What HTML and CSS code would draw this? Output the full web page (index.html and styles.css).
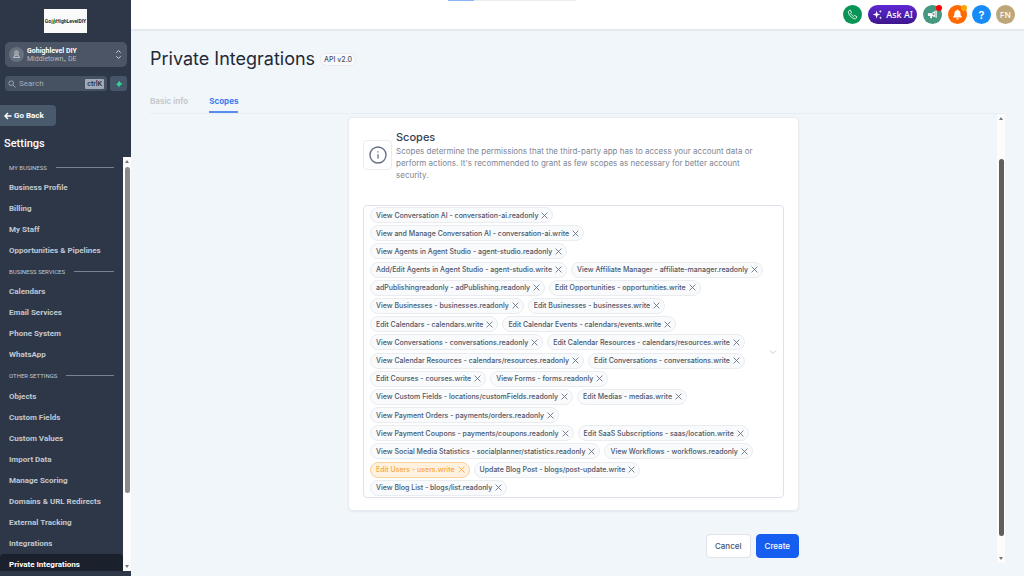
FILE: index.html
```html
<!DOCTYPE html>
<html lang="en">
<head>
<meta charset="utf-8">
<title>Private Integrations</title>
<link rel="stylesheet" href="styles.css">
</head>
<body>
<svg class="sprite" aria-hidden="true">
  <symbol id="x" viewBox="0 0 8 8"><path d="M1 1l6 6M7 1L1 7" fill="none" stroke="currentColor" stroke-width="1" stroke-linecap="round"/></symbol>
</svg>
<div class="app">
  <aside class="sidebar">
    <div class="brand"><span class="logo">Go<svg viewBox="0 0 6 7" aria-hidden="true"><path d="M0 3l1.500-2L3 3v4H0z" fill="#f5a623"/><path d="M2 4l2-4 2 4v1H4v2H2z" fill="#29a9d6"/><path d="M4 3l1-1 1 1v2L4 7z" fill="#3bb54a"/></svg>HighLevelDIY</span></div>
    <button class="account" type="button">
      <span class="account-icon"><svg viewBox="0 0 12 12" aria-hidden="true"><g fill="none" stroke="currentColor"><circle cx="6" cy="3.500" r="2.500"/><circle cx="6" cy="3.500" r=".6"/><path d="M4 6L2 10h8L8 6M4 8.500l2-2 2 2"/></g></svg></span>
      <span class="account-text"><strong>Gohighlevel DIY</strong><span>Middletown,, DE</span></span>
      <svg class="account-arrows" viewBox="0 0 8 12" aria-hidden="true"><path d="M1.500 4L4 1.500 6.500 4M1.500 8L4 10.500 6.500 8" fill="none" stroke="currentColor" stroke-width="1.100"/></svg>
    </button>
    <div class="search-row">
      <div class="search">
        <svg viewBox="0 0 10 10" aria-hidden="true"><path d="M6.500 6.500L9.300 9.300" stroke="currentColor" stroke-width="1.100"/><circle cx="4" cy="4" r="2.900" fill="none" stroke="currentColor" stroke-width="1.100"/></svg>
        <input type="text" placeholder="Search" aria-label="Search">
        <kbd>ctrlK</kbd>
      </div>
      <button class="bolt" type="button" aria-label="Quick actions"><svg viewBox="0 0 8 8" aria-hidden="true"><path d="M4.300.8L5.500 2.800 7.300 3.700 5.400 5.200 3.700 7.400 2.900 5.300.9 4.400 2.800 2.900z" fill="#34d399"/></svg></button>
    </div>
    <button class="back" type="button"><svg viewBox="0 0 8 8" aria-hidden="true"><path d="M7.500 4H1M4 1L1 4l3 3" fill="none" stroke="currentColor" stroke-width="1.400"/></svg>Go Back</button>
    <h2 class="side-title">Settings</h2>
    <div class="nav-wrap">
      <nav class="nav">
        <div class="nav-label">MY BUSINESS</div>
        <a href="#">Business Profile</a>
        <a href="#">Billing</a>
        <a href="#">My Staff</a>
        <a href="#">Opportunities &amp; Pipelines</a>
        <div class="nav-label">BUSINESS SERVICES</div>
        <a href="#">Calendars</a>
        <a href="#">Email Services</a>
        <a href="#">Phone System</a>
        <a href="#">WhatsApp</a>
        <div class="nav-label">OTHER SETTINGS</div>
        <a href="#">Objects</a>
        <a href="#">Custom Fields</a>
        <a href="#">Custom Values</a>
        <a href="#">Import Data</a>
        <a href="#">Manage Scoring</a>
        <a href="#">Domains &amp; URL Redirects</a>
        <a href="#">External Tracking</a>
        <a href="#">Integrations</a>
        <a href="#" class="active" aria-current="page">Private Integrations</a>
      </nav>
      <div class="scrollbar side-scroll" aria-hidden="true"><i class="up"></i><span class="thumb"></span><i class="down"></i></div>
    </div>
  </aside>

  <div class="page">
    <header class="topbar">
      <div class="loader"></div>
      <button class="round green" type="button" aria-label="Phone"><svg viewBox="0 0 12 12" aria-hidden="true"><path d="M2.200 1.800l1.300-.6L5 3.700l-1 .9c.5 1.500 1.700 2.800 3.300 3.400l1-1 2.500 1.500-.6 1.500c-.3.600-1 .8-1.700.7C4.900 10 2.100 7.100 1.500 3.400c-.1-.7.100-1.300.7-1.600z" fill="none" stroke="#fff" stroke-width=".9"/></svg></button>
      <button class="ask" type="button"><svg viewBox="0 0 12 12" aria-hidden="true"><path d="M5 2l1 3 3 1.100-3 1L5 10.300 4 7.100l-3.300-1L4 5z" fill="#fff"/><path d="M9 .7l.5 1.400 1.300.5-1.300.5L9 4.400l-.5-1.300-1.300-.5 1.300-.5zM9.300 8l.5 1.200 1.200.5-1.200.5-.5 1.200-.5-1.200-1.200-.5 1.200-.5z" fill="#fff"/></svg>Ask AI</button>
      <button class="round teal" type="button" aria-label="Announcements"><svg viewBox="0 0 12 12" aria-hidden="true"><path d="M1 4.500h4L9 2v7L5.500 7.500V10h-2V7.500H1z" fill="#fff"/><path d="M10 1.500v8" stroke="#fff" stroke-width="1.200"/><path d="M6 5l2-1v3L6 6z" fill="#43987f"/></svg><span class="badge red"></span></button>
      <button class="round orange" type="button" aria-label="Notifications"><svg viewBox="0 0 12 12" aria-hidden="true"><path d="M6 .5c.6 0 .8.400.8.900C8.500 1.800 9.300 3 9.300 5c0 2 .5 2.600 1.500 3.500v.7H1.200v-.7C2.200 7.600 2.700 7 2.700 5c0-2 .8-3.200 2.500-3.600 0-.5.200-.9.800-.9zM4.700 10h2.600c0 .9-.6 1.400-1.300 1.400S4.700 10.900 4.700 10z" fill="#fff"/></svg><span class="badge amber"></span></button>
      <button class="round blue" type="button" aria-label="Help">?</button>
      <button class="round tan" type="button" aria-label="Profile">FN</button>
    </header>
    <main class="main">
      <div class="heading"><h1>Private Integrations</h1><span class="version">API v2.0</span></div>
      <div class="tabs"><a href="#">Basic info</a><a href="#" class="selected" aria-current="page">Scopes</a></div>
      <div class="body">
        <div class="column">
          <section class="card">
            <div class="intro">
              <span class="info"><svg viewBox="0 0 18 18" aria-hidden="true"><circle cx="9" cy="9" r="8" fill="none" stroke="currentColor" stroke-width="1.400"/><path d="M9 8.200v4.300M9 5.200v1.300" stroke="currentColor" stroke-width="1.300"/></svg></span>
              <div><h2>Scopes</h2><p>Scopes determine the permissions that the third-party app has to access your account data or perform actions. It's recommended to grant as few scopes as necessary for better account security.</p></div>
            </div>
            <div class="select">
              <div class="tags">
                <div class="line"><span class="tag">View Conversation AI - conversation-ai.readonly<button type="button" aria-label="Remove"><svg><use href="#x"/></svg></button></span></div>
                <div class="line"><span class="tag">View and Manage Conversation AI - conversation-ai.write<button type="button" aria-label="Remove"><svg><use href="#x"/></svg></button></span></div>
                <div class="line"><span class="tag">View Agents in Agent Studio - agent-studio.readonly<button type="button" aria-label="Remove"><svg><use href="#x"/></svg></button></span></div>
                <div class="line"><span class="tag">Add/Edit Agents in Agent Studio - agent-studio.write<button type="button" aria-label="Remove"><svg><use href="#x"/></svg></button></span><span class="tag">View Affiliate Manager - affiliate-manager.readonly<button type="button" aria-label="Remove"><svg><use href="#x"/></svg></button></span></div>
                <div class="line"><span class="tag">adPublishingreadonly - adPublishing.readonly<button type="button" aria-label="Remove"><svg><use href="#x"/></svg></button></span><span class="tag">Edit Opportunities - opportunities.write<button type="button" aria-label="Remove"><svg><use href="#x"/></svg></button></span></div>
                <div class="line"><span class="tag">View Businesses - businesses.readonly<button type="button" aria-label="Remove"><svg><use href="#x"/></svg></button></span><span class="tag">Edit Businesses - businesses.write<button type="button" aria-label="Remove"><svg><use href="#x"/></svg></button></span></div>
                <div class="line"><span class="tag">Edit Calendars - calendars.write<button type="button" aria-label="Remove"><svg><use href="#x"/></svg></button></span><span class="tag">Edit Calendar Events - calendars/events.write<button type="button" aria-label="Remove"><svg><use href="#x"/></svg></button></span></div>
                <div class="line"><span class="tag">View Conversations - conversations.readonly<button type="button" aria-label="Remove"><svg><use href="#x"/></svg></button></span><span class="tag">Edit Calendar Resources - calendars/resources.write<button type="button" aria-label="Remove"><svg><use href="#x"/></svg></button></span></div>
                <div class="line"><span class="tag">View Calendar Resources - calendars/resources.readonly<button type="button" aria-label="Remove"><svg><use href="#x"/></svg></button></span><span class="tag">Edit Conversations - conversations.write<button type="button" aria-label="Remove"><svg><use href="#x"/></svg></button></span></div>
                <div class="line"><span class="tag">Edit Courses - courses.write<button type="button" aria-label="Remove"><svg><use href="#x"/></svg></button></span><span class="tag">View Forms - forms.readonly<button type="button" aria-label="Remove"><svg><use href="#x"/></svg></button></span></div>
                <div class="line"><span class="tag">View Custom Fields - locations/customFields.readonly<button type="button" aria-label="Remove"><svg><use href="#x"/></svg></button></span><span class="tag">Edit Medias - medias.write<button type="button" aria-label="Remove"><svg><use href="#x"/></svg></button></span></div>
                <div class="line"><span class="tag">View Payment Orders - payments/orders.readonly<button type="button" aria-label="Remove"><svg><use href="#x"/></svg></button></span></div>
                <div class="line"><span class="tag">View Payment Coupons - payments/coupons.readonly<button type="button" aria-label="Remove"><svg><use href="#x"/></svg></button></span><span class="tag">Edit SaaS Subscriptions - saas/location.write<button type="button" aria-label="Remove"><svg><use href="#x"/></svg></button></span></div>
                <div class="line"><span class="tag">View Social Media Statistics - socialplanner/statistics.readonly<button type="button" aria-label="Remove"><svg><use href="#x"/></svg></button></span><span class="tag">View Workflows - workflows.readonly<button type="button" aria-label="Remove"><svg><use href="#x"/></svg></button></span></div>
                <div class="line"><span class="tag warning">Edit Users - users.write<button type="button" aria-label="Remove"><svg><use href="#x"/></svg></button></span><span class="tag">Update Blog Post - blogs/post-update.write<button type="button" aria-label="Remove"><svg><use href="#x"/></svg></button></span></div>
                <div class="line"><span class="tag">View Blog List - blogs/list.readonly<button type="button" aria-label="Remove"><svg><use href="#x"/></svg></button></span></div>
              </div>
              <button class="open" type="button" aria-label="Show scopes"><svg viewBox="0 0 8 8" aria-hidden="true"><path d="M1 2.500l3 3 3-3" fill="none" stroke="currentColor" stroke-width=".9"/></svg></button>
            </div>
          </section>
          <div class="actions"><button class="btn" type="button">Cancel</button><button class="btn primary" type="button">Create</button></div>
        </div>
        <div class="scrollbar main-scroll" aria-hidden="true"><i class="up"></i><span class="thumb"></span><i class="down"></i></div>
      </div>
    </main>
  </div>
</div>
</body>
</html>
```
FILE: styles.css
```css
* { box-sizing: border-box; }
body { margin: 0; font-family: Inter, sans-serif; color: #1f2937; background: #f1f6fa; }
button, input { font: inherit; color: inherit; border: 0; padding: 0; margin: 0; background: none; }
h1, h2, p { margin: 0; }
a { color: inherit; text-decoration: none; }
svg { display: block; flex: none; }
.sprite { position: absolute; width: 0; height: 0; }
.app { display: flex; height: 100vh; overflow: hidden; }

/* Sidebar */
.sidebar { width: 131px; flex: none; display: flex; flex-direction: column; background: #2d3748; color: #fff; font-family: Roboto, sans-serif; padding-bottom: 5px; }
.brand { display: flex; justify-content: center; padding: 9px 0; }
.logo { display: flex; align-items: center; justify-content: center; width: 43px; height: 24px; background: #fafafa; color: #1c2b2c; font-size: 5px; font-weight: 700; }
.logo svg { width: 5px; height: 6px; }
.account { display: flex; align-items: center; gap: 3px; height: 25px; margin: 0 4px 0 5px; padding: 0 5px 0 4px; border-radius: 5px; background: #4b5565; text-align: left; }
.account-icon { display: grid; place-items: center; width: 15px; height: 15px; border-radius: 50%; background: #66707e; color: #d3d7dc; flex: none; }
.account-icon svg { width: 9px; height: 9px; }
.account-text { flex: 1; display: flex; flex-direction: column; font-size: 7px; line-height: 8px; color: #b4bac3; white-space: nowrap; }
.account-text strong { color: #fff; font-weight: 700; }
.account-arrows { width: 7px; height: 11px; color: #d0d5db; }
.search-row { display: flex; gap: 3px; margin: 9px 4px 0 5px; }
.search { flex: 1; min-width: 0; display: flex; align-items: center; gap: 3px; height: 15px; padding: 0 3px; border-radius: 3px; background: #465162; color: #a3adba; }
.search svg { width: 8px; height: 8px; }
.search input { flex: 1; min-width: 0; width: 0; font-size: 8px; line-height: 12px; outline: 0; }
.search input::placeholder { color: #a3adba; opacity: 1; }
.search kbd { padding: 0 2px; border-radius: 1px; background: #a0a9b7; color: #273142; font-family: inherit; font-size: 7px; font-weight: 500; line-height: 10px; }
.bolt { display: grid; place-items: center; width: 17px; border-radius: 3px; background: #465568; }
.bolt svg { width: 8px; height: 8px; }
.back { align-self: flex-start; display: flex; align-items: center; gap: 2px; height: 21px; margin-top: 14px; padding: 0 12px 0 4px; border-radius: 0 4px 4px 0; background: #4a5a6d; font-size: 8px; font-weight: 700; }
.back svg { width: 8px; height: 8px; }
.side-title { margin: 10px 0 0 4px; font-size: 11px; line-height: 15px; font-weight: 500; }
.nav-wrap { flex: 1; min-height: 0; display: flex; overflow: hidden; margin-top: 6px; }
.nav { flex: 1; min-width: 0; min-height: 418px; align-self: flex-start; display: flex; flex-direction: column; font-size: 8px; font-weight: 700; color: #c1c7d0; white-space: nowrap; }
.nav a { flex: 21 1 0; display: flex; align-items: center; padding-left: 9px; line-height: 11px; }
.nav a::before { content: ""; height: 12px; }
.nav .active { background: #1a202c; color: #fff; border-radius: 4px; }
.nav-label { flex: 20 1 0; display: flex; align-items: center; gap: 9px; padding: 0 9px; font-size: 6px; font-weight: 400; }
.nav-label::after { content: ""; flex: 1; height: 1px; background: #77838d; }

/* Scrollbars */
.scrollbar { display: flex; flex-direction: column; align-items: center; width: 8px; background: #fcfcfc; flex: none; padding: 3px 0; }
.scrollbar i { border: 2px solid transparent; flex: none; }
.scrollbar .up { border-top: 0; border-bottom: 3px solid #777; }
.scrollbar .down { border-bottom: 0; border-top: 3px solid #777; margin-top: auto; }
.thumb { width: 5px; border-radius: 3px; background: #8a8a8a; }
.side-scroll .thumb { height: 80%; margin-top: 4px; }
.main-scroll .thumb { height: 85%; margin-top: 39px; background: #5f5f5f; }

/* Top bar */
.page { flex: 1; min-width: 0; display: flex; flex-direction: column; }
.topbar { position: relative; display: flex; align-items: center; justify-content: flex-end; gap: 5px; height: 31px; padding: 0 9px 0 0; background: #fff; border-bottom: 2px solid #e5eaee; flex: none; }
.loader { position: absolute; top: 0; left: 317px; width: 128px; height: 1px; background: linear-gradient(90deg, #8bb6f5 20%, #e9edf1 20%); }
.round { position: relative; display: grid; place-items: center; width: 19px; height: 19px; border-radius: 50%; color: #fff; font-size: 8px; font-weight: 500; }
.round svg { width: 11px; height: 11px; }
.green { background: #079455; }
.teal { background: #43987f; margin: 0 1px; }
.orange { background: #ff6900; }
.blue { background: #188bf6; font-size: 11px; font-weight: 600; }
.tan { background: #bda678; }
.badge { position: absolute; top: 0; right: 0; width: 6px; height: 6px; border-radius: 50%; }
.red { background: #f00; }
.amber { background: #fba500; }
.ask { display: flex; align-items: center; gap: 3px; height: 19px; padding: 0 4px; border-radius: 10px; background: linear-gradient(#6027d5, #3d168d); color: #fff; font: 500 9px "Noto Sans", sans-serif; white-space: nowrap; margin-left: 1px; }
.ask svg { width: 11px; height: 11px; }

/* Page content */
.main { flex: 1; min-height: 0; display: flex; flex-direction: column; padding: 16px 19px 13px; }
.heading { display: flex; align-items: center; gap: 5px; }
h1 { font-size: 18px; line-height: 24px; font-weight: 400; }
.version { padding: 0 3px; border: 1px solid #e8eaf0; border-radius: 8px; background: #f9fafb; color: #475467; font-size: 7px; line-height: 11px; font-weight: 500; }
.tabs { display: flex; gap: 21px; margin-top: 22px; border-bottom: 1px solid #e9eef3; font-size: 8px; line-height: 16px; font-weight: 700; color: #c8cacd; }
.tabs a { padding-bottom: 2px; border-bottom: 2px solid transparent; }
.tabs .selected { color: #3b78f2; border-color: #598bf3; }
.body { flex: 1; min-height: 0; display: flex; }
.column { flex: 1; max-width: 451px; margin: 3px auto 0; }
.card { padding: 11px 14px 12px; border: 1px solid #e9edf1; border-radius: 5px; background: #fff; box-shadow: 0 1px 2px #10182812; }
.intro { display: flex; gap: 4px; padding-right: 16px; }
.info { display: grid; place-items: center; width: 29px; height: 30px; margin-top: 11px; flex: none; border: 1px solid #eaecf0; border-radius: 4px; color: #667085; }
.info svg { width: 18px; height: 18px; }
.card h2 { font-size: 11px; line-height: 16px; font-weight: 500; color: #344054; }
.card p { font-size: 8px; line-height: 12px; color: #7d8696; }
.select { display: flex; align-items: center; min-height: 293px; margin-top: 24px; padding: 1px 6px; border: 1px solid #e0e2eb; border-radius: 4px; }
.tags { flex: 1; align-self: stretch; display: flex; flex-direction: column; justify-content: space-between; }
.line { display: flex; gap: 4px; }
.tag { display: flex; align-items: center; gap: 3px; height: 16px; padding: 0 4px 0 5px; border: 1px solid #eaecf0; border-radius: 8px; background: #f9fafb; color: #4b5669; font-size: 7px; font-weight: 500; white-space: nowrap; }
.tag button { color: #667085; }
.tag svg { width: 7px; height: 7px; }
.warning { color: #fba53c; border-color: #fbd09a; background: #fff1df; }
.warning button { color: #fba53c; }
.open { color: #c2c5cc; }
.open svg { width: 8px; height: 8px; }
.actions { display: flex; justify-content: flex-end; gap: 5px; margin-top: 23px; }
.btn { height: 24px; padding: 0 8px; border: 1px solid #dfe2e7; border-radius: 4px; background: #fff; color: #475467; font-size: 8px; font-weight: 500; }
.primary { background: #155eef; border-color: #155eef; color: #fff; }
```
